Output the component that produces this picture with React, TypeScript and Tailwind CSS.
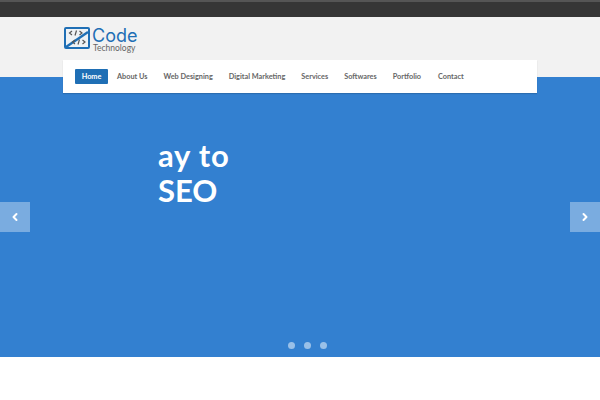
import { ChevronLeft, ChevronRight } from "lucide-react";

function Logo() {
  return (
    <div className="flex items-start">
      <svg width="26" height="22" viewBox="0 0 26 22">
        <rect x="1" y="1" width="24" height="20" rx="1" fill="#eef2f5" stroke="#1f6fb5" strokeWidth="2" />
        <path d="M2 20 L24 5" stroke="#1f6fb5" strokeWidth="2.4" />
        <path d="M8 4 L5.500 6 L8 8 M12.500 3.500 L11 8.500 M15.500 4 L18 6 L15.500 8" fill="none" stroke="#555" strokeWidth="1.2" />
        <path d="M11 13 L8.500 15 L11 17 M15.500 12.500 L14 17.500 M18.500 13 L21 15 L18.500 17" fill="none" stroke="#555" strokeWidth="1.2" />
      </svg>
      <div className="ml-[2px] flex flex-col">
        <div className="font-['Inter',sans-serif] text-[18px] leading-[17px] text-[#1f6fb5]">Code</div>
        <div className="font-['Lato',sans-serif] text-[8.500px] leading-[8px] text-[#666] ml-[1px]">Technology</div>
      </div>
    </div>
  );
}

export default function App() {
  return (
    <div className="w-[600px] h-[400px] overflow-hidden bg-white font-['Lato',sans-serif]">
      <div className="h-[17px] bg-[#363636] border-t-2 border-[#555]" />
      <div className="h-[60px] bg-[#f2f2f2] pl-[64px] pt-[10px]">
        <Logo />
      </div>
      <div className="h-[280px] bg-[#3380d0] flex flex-col relative">
        <nav className="-mt-[17px] mx-[63px] h-[33px] bg-white flex items-center pl-[12px] text-[7.300px] font-bold text-[#666] shrink-0 shadow-[0_1px_1px_rgba(0,0,0,0.15)]">
          <span className="w-[33px] h-[15px] flex items-center justify-center bg-[#1f6fb5] text-white rounded-[1px] pt-[1px]">Home</span>
          <span className="ml-[9px] pt-[2px]">About Us</span>
          <span className="ml-[16px] pt-[2px]">Web Designing</span>
          <span className="ml-[16px] pt-[2px]">Digital Marketing</span>
          <span className="ml-[16px] pt-[2px]">Services</span>
          <span className="ml-[16px] pt-[2px]">Softwares</span>
          <span className="ml-[16px] pt-[2px]">Portfolio</span>
          <span className="ml-[17px] pt-[2px]">Contact</span>
        </nav>
        <div className="pl-[158px] mt-[45px] text-white text-[31px] leading-[35px] font-bold">
          <div className="tracking-[0.8px]">ay to</div>
          <div>SEO</div>
        </div>
        <button className="absolute left-0 top-[125px] w-[30px] h-[30px] bg-white/35 flex items-center justify-center text-white">
          <ChevronLeft size={12} strokeWidth={4} />
        </button>
        <button className="absolute right-0 top-[125px] w-[30px] h-[30px] bg-white/35 flex items-center justify-center text-white">
          <ChevronRight size={12} strokeWidth={4} />
        </button>
        <div className="absolute bottom-[8px] left-0 right-0 flex justify-center gap-[9px] pl-[14px]">
          <span className="w-[7px] h-[7px] rounded-full bg-white/50" />
          <span className="w-[7px] h-[7px] rounded-full bg-white/50" />
          <span className="w-[7px] h-[7px] rounded-full bg-white/50" />
        </div>
      </div>
    </div>
  );
}
